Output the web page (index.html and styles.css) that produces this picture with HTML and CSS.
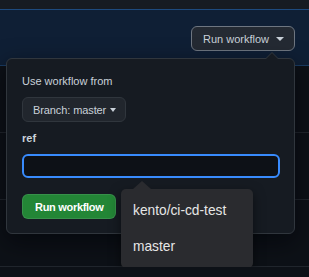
FILE: index.html
```html
<!DOCTYPE html>
<html lang="en">
<head>
    <meta charset="UTF-8">
    <meta name="viewport" content="width=device-width, initial-scale=1.0">
    <title>Run workflow</title>
    <link rel="stylesheet" href="styles.css">
</head>
<body>
    <div class="box">
        <div class="box-header"></div>

        <div class="box-row dispatch-row">
            <div class="dispatch-menu">
                <button class="btn btn-open" type="button">Run workflow <span class="caret"></span></button>

                <div class="popover">
                    <form class="popover-body">
                        <div class="menu-title">Use workflow from</div>
                        <button class="btn btn-branch" type="button">Branch: master <span class="caret"></span></button>

                        <label class="field-label" for="ref">ref</label>
                        <div class="input-wrap">
                            <input type="text" id="ref" name="ref" class="form-control">
                            <ul class="suggestions">
                                <li>kento/ci-cd-test</li>
                                <li>master</li>
                            </ul>
                        </div>

                        <button class="btn btn-primary" type="submit">Run workflow</button>
                    </form>
                </div>
            </div>
        </div>

        <div class="box-row"></div>
        <div class="box-row"></div>
        <div class="box-row"></div>
    </div>
</body>
</html>
```

FILE: styles.css
```css
:root {
    --canvas: #0d1117;
    --overlay: #161b22;
    --border: #30363d;
    --border-muted: #21262d;
    --btn-bg: #21262d;
    --text: #c9d1d9;
    --accent: #388bfd;
    --green: #238636;
    --radius: 6px;
}

* {
    margin: 0;
    padding: 0;
    box-sizing: border-box;
}

body {
    background-color: var(--canvas);
    color: var(--text);
    font-family: 'Liberation Sans', Arial, sans-serif;
    font-size: 11px;
    line-height: 16px;
    overflow: hidden;
}

.box-header {
    height: 9px;
    background-color: #161b22;
}

.box-row {
    height: 67px;
    border-bottom: 1px solid var(--border-muted);
}

.dispatch-row {
    height: 57px;
    display: flex;
    align-items: center;
    justify-content: flex-end;
    padding: 0 14px 0 0;
    background-color: #0f1f35;
    border-top: 1px solid #1d4a7e;
    border-bottom: 1px solid #1a3c63;
}

.dispatch-menu {
    position: relative;
    margin-top: 2px;
}

.btn {
    display: inline-flex;
    align-items: center;
    height: 25px;
    padding: 0 11px;
    font-family: inherit;
    font-size: 11px;
    color: var(--text);
    background-color: var(--btn-bg);
    border: 1px solid var(--border);
    border-radius: var(--radius);
    cursor: pointer;
}

.btn-open {
    background-color: #242a33;
    border-color: #6e7681;
    padding: 0 10px 0 11px;
}

.caret {
    display: inline-block;
    width: 0;
    height: 0;
    margin-left: 6px;
    border-top: 4px solid currentColor;
    border-left: 4px solid transparent;
    border-right: 4px solid transparent;
}

.btn-open .caret {
    margin-left: 7px;
}

.btn-branch {
    padding: 0 9px 0 10px;
    letter-spacing: -0.1px;
}

.btn-branch .caret {
    margin-left: 4px;
    border-left-width: 3px;
    border-right-width: 3px;
}

/* dropdown card under the button */
.popover {
    position: absolute;
    top: calc(100% + 7px);
    right: 0;
    width: 289px;
    background-color: var(--overlay);
    border: 1px solid var(--border);
    border-radius: var(--radius);
    box-shadow: 0 8px 24px rgba(1, 4, 9, 0.6);
    z-index: 10;
}

.popover::before,
.popover::after {
    content: "";
    position: absolute;
    right: 15px;
    width: 0;
    height: 0;
    border-left: 7px solid transparent;
    border-right: 7px solid transparent;
}

.popover::before {
    top: -7px;
    border-bottom: 7px solid var(--border);
}

.popover::after {
    top: -6px;
    border-bottom: 7px solid var(--overlay);
}

.popover-body {
    display: flex;
    flex-direction: column;
    align-items: flex-start;
    padding: 14px 14px 14px 15px;
}

.menu-title {
    margin-bottom: 8px;
}

.field-label {
    margin-top: 8px;
    margin-bottom: 8px;
    font-weight: 700;
}

.input-wrap {
    position: relative;
    width: 100%;
}

.form-control {
    display: block;
    width: 100%;
    height: 24px;
    padding: 0 8px;
    font-family: inherit;
    font-size: 11px;
    color: var(--text);
    background-color: var(--canvas);
    border: 2px solid var(--accent);
    border-radius: var(--radius);
    outline: none;
}

.btn-primary {
    margin-top: 16px;
    padding: 0 11px 0 12px;
    color: #ffffff;
    font-weight: 700;
    letter-spacing: -0.3px;
    background-color: var(--green);
    border-color: rgba(240, 246, 252, 0.1);
}

/* native-looking datalist popup */
.suggestions {
    position: absolute;
    top: calc(100% + 11px);
    left: 99px;
    width: 132px;
    padding: 4px 0 3px;
    list-style: none;
    background-color: #2a2b2f;
    border-radius: 5px;
    box-shadow: 0 4px 12px rgba(0, 0, 0, 0.5);
    z-index: 20;
}

.suggestions::before {
    content: "";
    position: absolute;
    top: -8px;
    left: 12px;
    border-left: 9px solid transparent;
    border-right: 9px solid transparent;
    border-bottom: 8px solid #2a2b2f;
}

.suggestions li {
    height: 36px;
    line-height: 36px;
    padding: 0 12px;
    font-size: 13.75px;
    color: #e6e6e6;
}
```
